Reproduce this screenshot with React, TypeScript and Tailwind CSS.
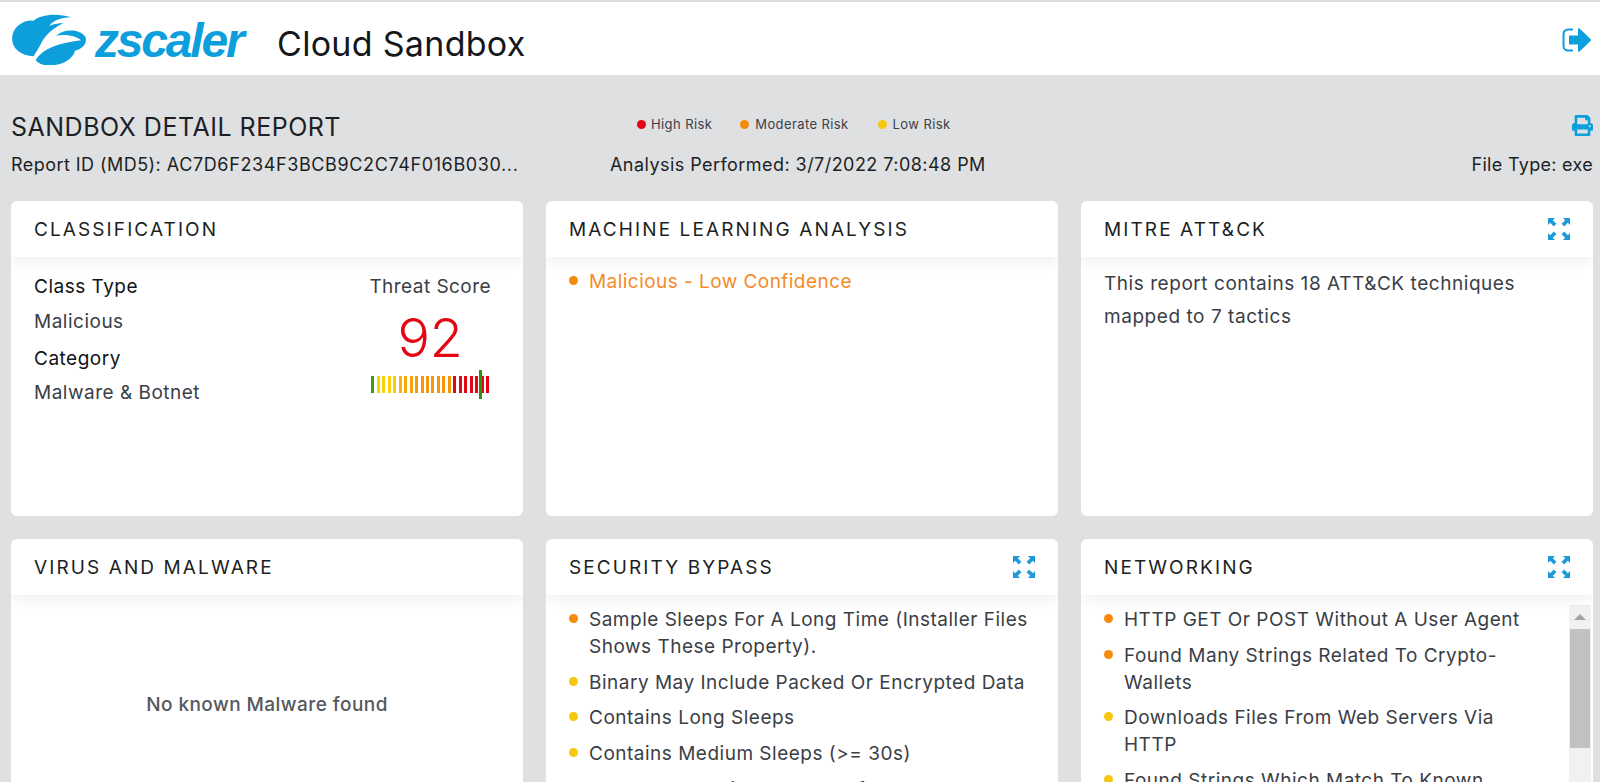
import { FaPrint } from 'react-icons/fa';

const ORANGE = 'bg-[#f58a0b]';
const YELLOW = 'bg-[#f5c70e]';

// four little arrows pointing out of the corners
function ExpandIcon() {
  return (
    <svg width="22" height="22" viewBox="0 0 22 22" fill="#1e9ad9">
      <path d="M0 0h7L4.8 2.2 8.4 5.8 5.8 8.4 2.2 4.8 0 7z" />
      <path d="M22 0h-7l2.2 2.2-3.6 3.6 2.6 2.6 3.6-3.6L22 7z" />
      <path d="M0 22h7l-2.2-2.2 3.6-3.6-2.6-2.6-3.6 3.6L0 15z" />
      <path d="M22 22h-7l2.2-2.2-3.6-3.6 2.6-2.6 3.6 3.6L22 15z" />
    </svg>
  );
}

function LogoutIcon() {
  return (
    <svg width="29" height="24" viewBox="0 0 29 24" fill="#0c9fdc">
      <path d="M11 1.5H6A4.5 4.5 0 0 0 1.5 6v12A4.5 4.5 0 0 0 6 22.5h5" fill="none" stroke="#0c9fdc" strokeWidth="2" />
      <path d="M7 7.5h9V1.2c0-.8.9-1.2 1.5-.6l11 10.5c.5.5.5 1.300 0 1.800l-11 10.500c-.6.600-1.500.200-1.500-.600V16.500H7z" />
    </svg>
  );
}

function Logo() {
  return (
    <div className="flex items-center w-[237px] h-[52px]">
      <svg width="84" height="51" viewBox="30 25 252 153" className="shrink-0" fill="#0c9fdc">
        <path d="M33 98C35 65 65 42 98 45C115 28 165 20 212 35C185 35 160 42 145 60C160 55 175 52 188 52C160 65 135 85 122 110C112 130 102 145 98 152C60 150 33 130 33 98Z" />
        <path d="M165 90C190 68 235 70 252 92C262 110 245 130 222 135C215 165 170 185 130 178C118 176 108 170 104 163C125 130 170 112 240 104C225 90 190 85 165 90Z" />
      </svg>
      <span className="font-['Liberation_Sans',sans-serif] font-bold italic text-[48px] leading-none tracking-[-2.2px] text-[#0c9fdc] mt-[2px]">zscaler</span>
    </div>
  );
}

function Dot({ color }: { color: string }) {
  return <span className={`block w-[9px] h-[9px] rounded-full shrink-0 ${color}`} />;
}

function Card({ title, expand, children }: { title: string; expand?: boolean; children?: React.ReactNode }) {
  return (
    <div className="bg-white rounded-[6px] h-[315px] flex flex-col overflow-hidden">
      <div className="h-[56px] shrink-0 flex items-center justify-between pl-[23px] pr-[23px] shadow-[0_4px_14px_rgba(0,0,0,0.07)] z-10">
        <span className="text-[19px] tracking-[2.1px] text-[#1c1f24] mt-[3px]">{title}</span>
        {expand && <ExpandIcon />}
      </div>
      {children}
    </div>
  );
}

function BulletList({ items }: { items: { text: string; color: string }[] }) {
  return (
    <ul className="flex flex-col gap-[8.7px]">
      {items.map((item) => (
        <li key={item.text} className="flex text-[19px] leading-[27px] tracking-[0.5px] text-[#3a3e45]">
          <span className="w-[20px] shrink-0 pt-[8px]">
            <Dot color={item.color} />
          </span>
          <span>{item.text}</span>
        </li>
      ))}
    </ul>
  );
}

const TICKS = [
  '#3f9a12', '#f9d20c', '#f9d20c', '#f9d20c', '#f9cc0c', '#f5b40c', '#f5a80c', '#f5a00c', '#f59a0b',
  '#f5960b', '#f5960b', '#f5960b', '#f5960b', '#f5960b', '#f5960b', '#e30613', '#e30613', '#e30613',
  '#e30613', '#e30613', '#e30613', '#e30613',
];

function ScoreBar() {
  return (
    <div className="relative flex gap-[2.48px] h-[17px]">
      {TICKS.map((color, i) => (
        <span key={i} className="w-[3px] h-full" style={{ backgroundColor: color }} />
      ))}
      <span className="absolute left-[108px] -top-[6px] w-[3px] h-[29px] bg-[#2e8f12]" />
    </div>
  );
}

const bypass = [
  { text: 'Sample Sleeps For A Long Time (Installer Files Shows These Property).', color: ORANGE },
  { text: 'Binary May Include Packed Or Encrypted Data', color: YELLOW },
  { text: 'Contains Long Sleeps', color: YELLOW },
  { text: 'Contains Medium Sleeps (>= 30s)', color: YELLOW },
  { text: 'Executes Massive Amount Of Sleeps In A Loop', color: YELLOW },
];

const networking = [
  { text: 'HTTP GET Or POST Without A User Agent', color: ORANGE },
  { text: 'Found Many Strings Related To Crypto-Wallets', color: ORANGE },
  { text: 'Downloads Files From Web Servers Via HTTP', color: YELLOW },
  { text: 'Found Strings Which Match To Known Social Media URLs', color: YELLOW },
];

export default function App() {
  return (
    <div className="h-screen overflow-hidden bg-[#dfe0e2] font-['Inter',sans-serif] text-[#1c1f24]">
      <header className="h-[75px] bg-white border-t-2 border-[#dcdcdc] flex items-center pl-[11px] pr-[9px]">
        <div className="mt-[2px]">
          <Logo />
        </div>
        <h1 className="ml-[29px] mt-[10px] text-[34px] leading-none tracking-[0.3px] text-[#14171c]">Cloud Sandbox</h1>
        <div className="ml-auto mt-[2px]">
          <LogoutIcon />
        </div>
      </header>

      <main className="pl-[11px] pr-[7px]">
        <div className="h-[126px] flex flex-col">
          <div className="relative flex items-center justify-between pt-[37px]">
            <h2 className="text-[25px] leading-[30px] tracking-[0.5px]">SANDBOX DETAIL REPORT</h2>
            <div className="absolute left-[626px] top-[40px] flex items-center text-[13px] tracking-[0.4px] text-[#3b3f46]">
              <Dot color="bg-[#e30613]" />
              <span className="ml-[5px] mr-[28px]">High Risk</span>
              <Dot color={ORANGE} />
              <span className="ml-[6px] mr-[29px]">Moderate Risk</span>
              <Dot color={YELLOW} />
              <span className="ml-[6px]">Low Risk</span>
            </div>
            <FaPrint className="text-[#0c9fdc] mb-[4px]" size={21} />
          </div>
          <div className="grid grid-cols-[599px_1fr_auto] text-[18px] leading-[24px] tracking-[0.45px] mt-[11px]">
            <span>
              Report ID (MD5): <span className="tracking-[0.62px]">AC7D6F234F3BCB9C2C74F016B030...</span>
            </span>
            <span>Analysis Performed: 3/7/2022 7:08:48 PM</span>
            <span className="tracking-[0.3px]">File Type: exe</span>
          </div>
        </div>

        <div className="grid grid-cols-3 gap-[23px]">
          <Card title="CLASSIFICATION">
            <div className="flex justify-between pl-[23px] pr-[32px] pt-[16px]">
              <div className="text-[19px] tracking-[0.5px] text-[#3a3e45]">
                <div className="leading-[27px] text-[#111317]">Class Type</div>
                <div className="leading-[27px] mt-[8px]">Malicious</div>
                <div className="leading-[27px] mt-[10px] text-[#111317]">Category</div>
                <div className="leading-[27px] mt-[7px]">Malware &amp; Botnet</div>
              </div>
              <div className="flex flex-col items-center">
                <div className="text-[19px] tracking-[0.45px] leading-[27px] text-[#3a3e45]">Threat Score</div>
                <div className="text-[54px] leading-[60px] mt-[8px] text-[#e30613] font-light">92</div>
                <div className="mt-[8px]">
                  <ScoreBar />
                </div>
              </div>
            </div>
          </Card>
          <Card title="MACHINE LEARNING ANALYSIS">
            <div className="pl-[23px] pt-[11px] flex text-[19px] leading-[27px] text-[#f58a2b] tracking-[0.45px]">
              <span className="w-[20px] pt-[8px]">
                <Dot color={ORANGE} />
              </span>
              Malicious - Low Confidence
            </div>
          </Card>
          <Card title="MITRE ATT&CK" expand>
            <p className="pl-[23px] pr-[40px] pt-[10px] text-[19px] leading-[33px] tracking-[0.55px] text-[#3a3e45]">
              This report contains 18 ATT&amp;CK techniques mapped to 7 tactics
            </p>
          </Card>
          <Card title="VIRUS AND MALWARE">
            <div className="flex justify-center pt-[96px] text-[19px] leading-[27px] tracking-[0.45px] font-medium text-[#55585e]">
              No known Malware found
            </div>
          </Card>
          <Card title="SECURITY BYPASS" expand>
            <div className="pl-[23px] pr-[20px] pt-[11px]">
              <BulletList items={bypass} />
            </div>
          </Card>
          <Card title="NETWORKING" expand>
            <div className="flex flex-1 min-h-0">
              <div className="flex-1 pl-[23px] pr-[29px] pt-[11px]">
                <BulletList items={networking} />
              </div>
              {/* fake scrollbar, same as the native one in the shot */}
              <div className="w-[22px] mr-[2px] mt-[10px] bg-[#f1f1f1] flex flex-col items-center">
                <svg width="12" height="6" viewBox="0 0 12 6" className="mt-[9px]" fill="#a3a3a3">
                  <path d="M6 0l6 6H0z" />
                </svg>
                <div className="w-[20px] h-[119px] mt-[9px] bg-[#c1c1c1]" />
              </div>
            </div>
          </Card>
        </div>
      </main>
    </div>
  );
}
